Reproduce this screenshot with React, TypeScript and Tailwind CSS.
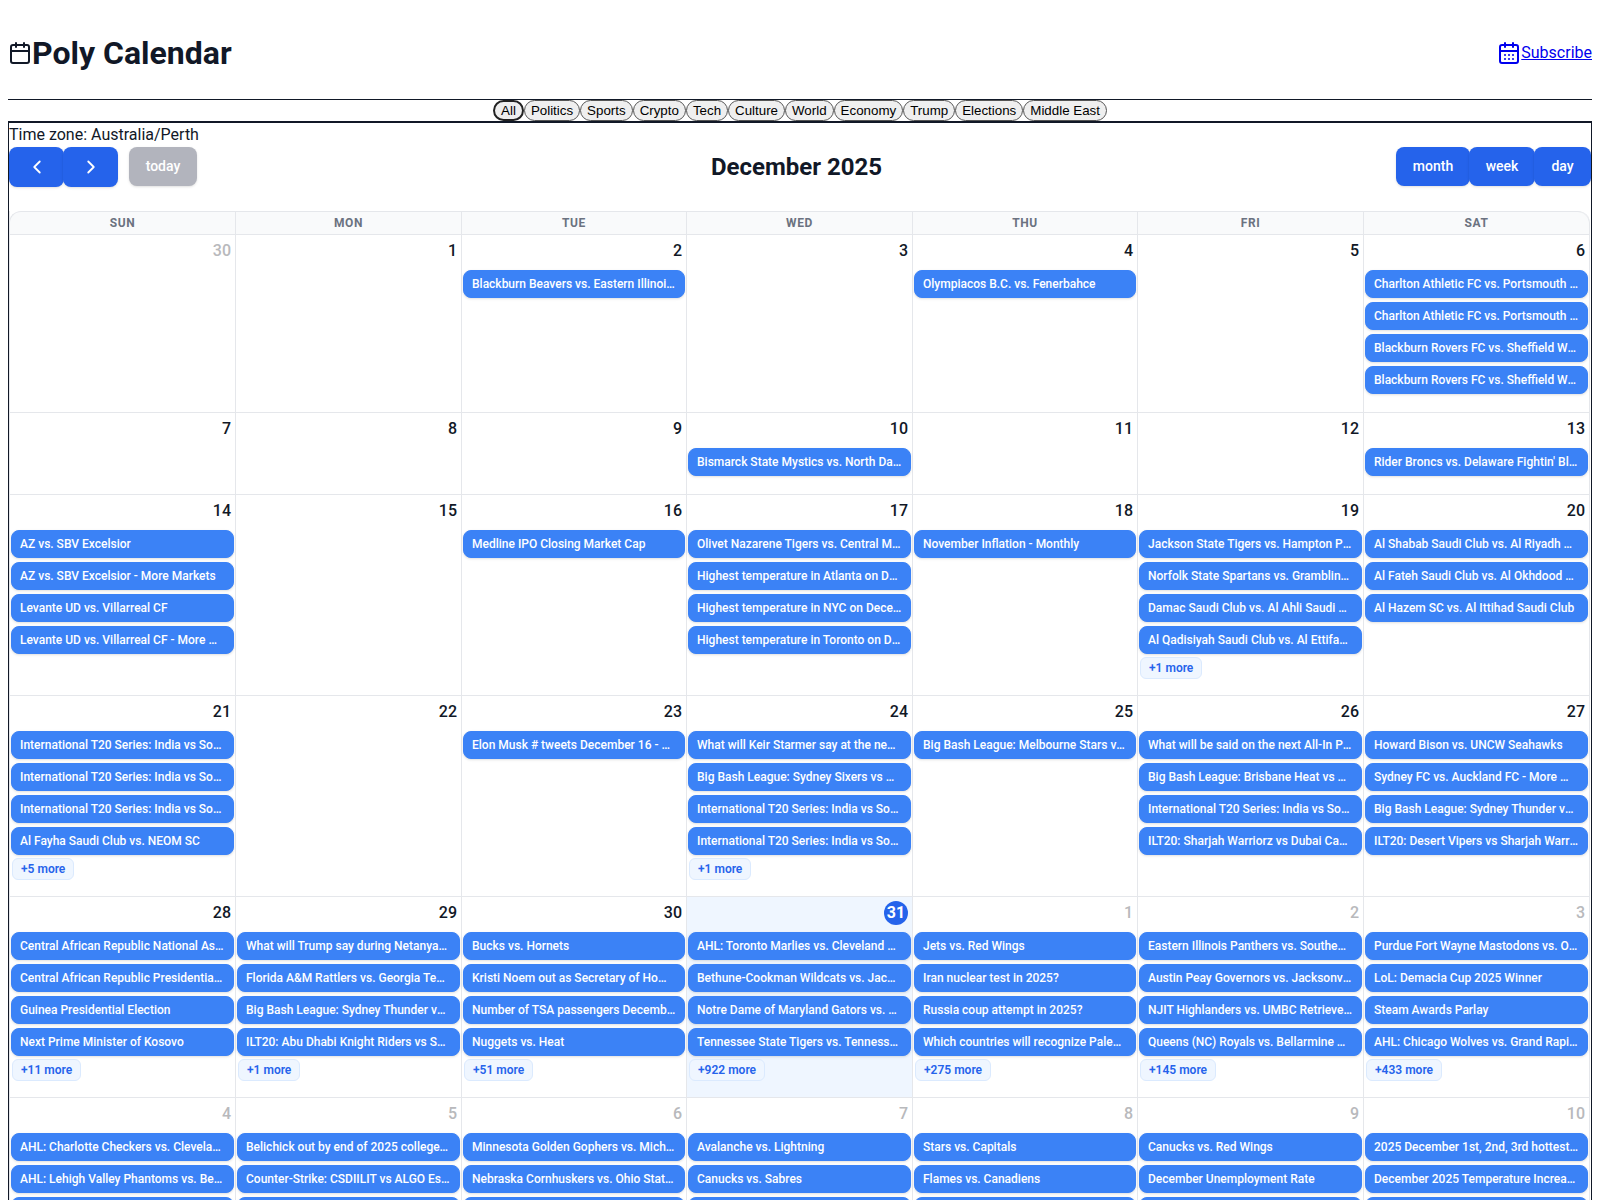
import { Calendar, CalendarDays, ChevronLeft, ChevronRight } from "lucide-react";

type Day = {
  date: number;
  muted?: boolean;
  today?: boolean;
  events?: string[];
  more?: number;
};

const filters = ["All", "Politics", "Sports", "Crypto", "Tech", "Culture", "World", "Economy", "Trump", "Elections", "Middle East"];
const weekdays = ["Sun", "Mon", "Tue", "Wed", "Thu", "Fri", "Sat"];

const T20 = "International T20 Series: India vs South Africa";

const weeks: Day[][] = [
  [
    { date: 30, muted: true },
    { date: 1 },
    { date: 2, events: ["Blackburn Beavers vs. Eastern Illinois Panthers"] },
    { date: 3 },
    { date: 4, events: ["Olympiacos B.C. vs. Fenerbahce"] },
    { date: 5 },
    {
      date: 6,
      events: [
        "Charlton Athletic FC vs. Portsmouth FC - Spread",
        "Charlton Athletic FC vs. Portsmouth FC - More Markets",
        "Blackburn Rovers FC vs. Sheffield Wednesday FC",
        "Blackburn Rovers FC vs. Sheffield Wednesday FC - More Markets",
      ],
    },
  ],
  [
    { date: 7 },
    { date: 8 },
    { date: 9 },
    { date: 10, events: ["Bismarck State Mystics vs. North Dakota Lady Sioux"] },
    { date: 11 },
    { date: 12 },
    { date: 13, events: ["Rider Broncs vs. Delaware Fightin' Blue Hens"] },
  ],
  [
    {
      date: 14,
      events: [
        "AZ vs. SBV Excelsior",
        "AZ vs. SBV Excelsior - More Markets",
        "Levante UD vs. Villarreal CF",
        "Levante UD vs. Villarreal CF - More Markets",
      ],
    },
    { date: 15 },
    { date: 16, events: ["Medline IPO Closing Market Cap"] },
    {
      date: 17,
      events: [
        "Olivet Nazarene Tigers vs. Central Methodist Eagles",
        "Highest temperature in Atlanta on December 17?",
        "Highest temperature in NYC on December 17?",
        "Highest temperature in Toronto on December 17?",
      ],
    },
    { date: 18, events: ["November Inflation - Monthly"] },
    {
      date: 19,
      events: [
        "Jackson State Tigers vs. Hampton Pirates",
        "Norfolk State Spartans vs. Grambling State Tigers",
        "Damac Saudi Club vs. Al Ahli Saudi Club",
        "Al Qadisiyah Saudi Club vs. Al Ettifaq Saudi Club",
      ],
      more: 1,
    },
    {
      date: 20,
      events: [
        "Al Shabab Saudi Club vs. Al Riyadh Saudi Club",
        "Al Fateh Saudi Club vs. Al Okhdood Saudi Club",
        "Al Hazem SC vs. Al Ittihad Saudi Club",
      ],
    },
  ],
  [
    { date: 21, events: [T20, T20, T20, "Al Fayha Saudi Club vs. NEOM SC"], more: 5 },
    { date: 22 },
    { date: 23, events: ["Elon Musk # tweets December 16 - December 23, 2025?"] },
    {
      date: 24,
      events: [
        "What will Keir Starmer say at the next Prime Minister's Questions?",
        "Big Bash League: Sydney Sixers vs Perth Scorchers",
        T20,
        T20,
      ],
      more: 1,
    },
    { date: 25, events: ["Big Bash League: Melbourne Stars vs Melbourne Renegades"] },
    {
      date: 26,
      events: [
        "What will be said on the next All-In Podcast?",
        "Big Bash League: Brisbane Heat vs Hobart Hurricanes",
        T20,
        "ILT20: Sharjah Warriorz vs Dubai Capitals",
      ],
    },
    {
      date: 27,
      events: [
        "Howard Bison vs. UNCW Seahawks",
        "Sydney FC vs. Auckland FC - More Markets",
        "Big Bash League: Sydney Thunder vs Adelaide Strikers",
        "ILT20: Desert Vipers vs Sharjah Warriorz",
      ],
    },
  ],
  [
    {
      date: 28,
      events: [
        "Central African Republic National Assembly Election",
        "Central African Republic Presidential Election",
        "Guinea Presidential Election",
        "Next Prime Minister of Kosovo",
      ],
      more: 11,
    },
    {
      date: 29,
      events: [
        "What will Trump say during Netanyahu meeting?",
        "Florida A&M Rattlers vs. Georgia Tech Yellow Jackets",
        "Big Bash League: Sydney Thunder vs Perth Scorchers",
        "ILT20: Abu Dhabi Knight Riders vs Sharjah Warriorz",
      ],
      more: 1,
    },
    {
      date: 30,
      events: [
        "Bucks vs. Hornets",
        "Kristi Noem out as Secretary of Homeland Security?",
        "Number of TSA passengers December 30?",
        "Nuggets vs. Heat",
      ],
      more: 51,
    },
    {
      date: 31,
      today: true,
      events: [
        "AHL: Toronto Marlies vs. Cleveland Monsters",
        "Bethune-Cookman Wildcats vs. Jackson State Tigers",
        "Notre Dame of Maryland Gators vs. Delaware State",
        "Tennessee State Tigers vs. Tennessee Tech Golden",
      ],
      more: 922,
    },
    {
      date: 1,
      muted: true,
      events: [
        "Jets vs. Red Wings",
        "Iran nuclear test in 2025?",
        "Russia coup attempt in 2025?",
        "Which countries will recognize Palestine in 2025?",
      ],
      more: 275,
    },
    {
      date: 2,
      muted: true,
      events: [
        "Eastern Illinois Panthers vs. Southeast Missouri",
        "Austin Peay Governors vs. Jacksonville Dolphins",
        "NJIT Highlanders vs. UMBC Retrievers",
        "Queens (NC) Royals vs. Bellarmine Knights",
      ],
      more: 145,
    },
    {
      date: 3,
      muted: true,
      events: [
        "Purdue Fort Wayne Mastodons vs. Oakland Golden Grizzlies",
        "LoL: Demacia Cup 2025 Winner",
        "Steam Awards Parlay",
        "AHL: Chicago Wolves vs. Grand Rapids Griffins",
      ],
      more: 433,
    },
  ],
  [
    { date: 4, muted: true, events: ["AHL: Charlotte Checkers vs. Cleveland Monsters", "AHL: Lehigh Valley Phantoms vs. Bellevue", "\u00a0"] },
    { date: 5, muted: true, events: ["Belichick out by end of 2025 college football season?", "Counter-Strike: CSDIILIT vs ALGO Esports", "\u00a0"] },
    { date: 6, muted: true, events: ["Minnesota Golden Gophers vs. Michigan Wolverines", "Nebraska Cornhuskers vs. Ohio State Buckeyes", "\u00a0"] },
    { date: 7, muted: true, events: ["Avalanche vs. Lightning", "Canucks vs. Sabres", "\u00a0"] },
    { date: 8, muted: true, events: ["Stars vs. Capitals", "Flames vs. Canadiens", "\u00a0"] },
    { date: 9, muted: true, events: ["Canucks vs. Red Wings", "December Unemployment Rate", "\u00a0"] },
    { date: 10, muted: true, events: ["2025 December 1st, 2nd, 3rd hottest on record?", "December 2025 Temperature Increase", "\u00a0"] },
  ],
];

function ToolbarButton({ children, className }: { children: React.ReactNode; className: string }) {
  return (
    <button
      type="button"
      className={`flex items-center justify-center rounded-lg text-sm font-medium text-white shadow-sm ${className}`}
    >
      {children}
    </button>
  );
}

function DayCell({ day }: { day: Day }) {
  return (
    <div className={`min-w-0 border-r border-b border-[#e5e7eb] pb-[14px] ${day.today ? "bg-[#eff6ff]" : ""}`}>
      <div className="flex h-[35px] justify-end px-1 pt-1">
        {day.today ? (
          <span className="flex size-6 items-center justify-center rounded-full bg-[#2563eb] font-bold text-white">
            {day.date}
          </span>
        ) : (
          <span className={`leading-6 font-medium ${day.muted ? "text-[#b8b9bc]" : "text-[#111827]"}`}>
            {day.date}
          </span>
        )}
      </div>
      {day.events?.map((title, i) => (
        <div
          key={i}
          className="mx-[1px] mb-1 truncate rounded-lg border border-[#3b82f6] bg-[#3b82f6] py-[5px] pr-[8.5px] pl-2 text-xs leading-4 font-medium text-white shadow-sm"
        >
          {title}
        </div>
      ))}
      {day.more ? (
        <div className="mx-[2px] -mt-[1px] mb-[2px] h-[22px] w-fit rounded-md border border-[#dbeafe] bg-[#eff6ff] px-2 text-xs leading-5 font-semibold text-[#2563eb]">
          +{day.more} more
        </div>
      ) : null}
    </div>
  );
}

export default function App() {
  return (
    <div className="bg-white p-2 font-['Roboto',sans-serif] text-base text-[#111827]">
      <header className="flex h-[92px] items-center justify-between border-b border-[#111827] pb-[2px]">
        <h1 className="flex items-center text-[32px] leading-10 font-bold">
          <Calendar size={24} />
          Poly Calendar
        </h1>
        <a href="#" className="flex items-center text-[#0000ee] underline">
          <CalendarDays size={24} />
          Subscribe
        </a>
      </header>

      <div className="flex h-[21px] justify-center font-['Liberation_Sans',Arial,sans-serif] text-[13.33px] text-black">
        {filters.map((name) => (
          <button
            key={name}
            type="button"
            className={`rounded-full bg-[#efefef] px-[6px] leading-[15px] ${
              name === "All" ? "border-2 border-[#222]" : "border border-[#555]"
            }`}
          >
            {name}
          </button>
        ))}
      </div>

      <section className="border border-t-2 border-[#111827]">
        <div className="h-6 leading-6">Time zone: Australia/Perth</div>
        <div className="mb-6 flex items-start justify-between">
          <div className="flex items-start">
            <ToolbarButton className="h-10 w-[55px] bg-[#2563eb]">
              <ChevronLeft size={22} />
            </ToolbarButton>
            <ToolbarButton className="-ml-[1px] h-10 w-[55px] bg-[#2563eb]">
              <ChevronRight size={22} />
            </ToolbarButton>
            <ToolbarButton className="ml-[11px] h-[39px] w-[68px] bg-[#b2b4bd] pb-[2px]">today</ToolbarButton>
          </div>
          <h2 className="text-2xl leading-10 font-bold">December 2025</h2>
          <div className="flex items-start">
            <ToolbarButton className="h-[39px] w-[74px] bg-[#2563eb] pb-[2px]">month</ToolbarButton>
            <ToolbarButton className="-ml-[1px] h-[39px] w-[66px] bg-[#2563eb] pb-[2px]">week</ToolbarButton>
            <ToolbarButton className="-ml-[1px] h-[39px] w-[57px] bg-[#2563eb] pb-[2px]">day</ToolbarButton>
          </div>
        </div>

        <div className="mr-[1px] border-l border-[#e5e7eb]">
          <div className="-ml-[1px] grid grid-cols-[226px_226px_225px_226px_225px_226px_226px] rounded-t-xl border-t border-l border-[#e5e7eb] bg-[#f9fafb]">
            {weekdays.map((name, i) => (
              <div
                key={name}
                className={`h-[23px] border-r border-b border-[#e5e7eb] text-center text-xs leading-[22px] font-bold tracking-[0.6px] text-[#6b7280] uppercase ${
                  i === 6 ? "rounded-tr-xl" : ""
                }`}
              >
                {name}
              </div>
            ))}
          </div>
          {weeks.map((week) => (
            <div key={week[0].date} className="grid grid-cols-[226px_226px_225px_226px_225px_226px_226px]">
              {week.map((day) => (
                <DayCell key={day.date} day={day} />
              ))}
            </div>
          ))}
        </div>
      </section>
    </div>
  );
}
